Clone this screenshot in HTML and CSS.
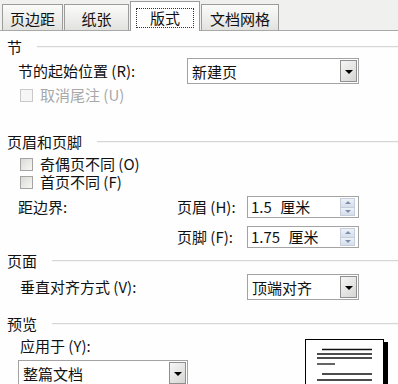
FILE: index.html
```html
<!DOCTYPE html>
<html lang="zh-CN">
<head>
<meta charset="utf-8">
<link rel="stylesheet" href="styles.css">
</head>
<body>
<div class="tabs">
  <div class="tab t1">页边距</div>
  <div class="tab t2">纸张</div>
  <div class="tab t3 active"><span class="focus">版式</span></div>
  <div class="tab t4">文档网格</div>
</div>
<div class="panel">
  <div class="sec s1"><span>节</span><i class="rule"></i></div>
  <div class="row r-start">
    <span class="lbl w169">节的起始位置 (R):</span>
    <div class="select w172"><span class="val">新建页</span><span class="btn"><i class="tri"></i></span></div>
  </div>
  <div class="check disabled r-endnote"><span class="box"></span><span class="ctext">取消尾注 (U)</span></div>

  <div class="sec s2"><span>页眉和页脚</span><i class="rule"></i></div>
  <div class="check r-odd"><span class="box"></span><span class="ctext">奇偶页不同 (O)</span></div>
  <div class="check r-first"><span class="box"></span><span class="ctext">首页不同 (F)</span></div>
  <div class="row r-spin1">
    <span class="lbl w159">距边界:</span>
    <span class="lbl w70">页眉 (H):</span>
    <div class="spin"><span class="val">1.5 厘米</span><span class="spinbtns"><span class="up"><i class="tri-up"></i></span><span class="dn"><i class="tri-dn"></i></span></span></div>
  </div>
  <div class="row r-spin2">
    <span class="lbl w159"></span>
    <span class="lbl w70">页脚 (F):</span>
    <div class="spin"><span class="val">1.75 厘米</span><span class="spinbtns"><span class="up"><i class="tri-up"></i></span><span class="dn"><i class="tri-dn"></i></span></span></div>
  </div>

  <div class="sec s3"><span>页面</span><i class="rule"></i></div>
  <div class="row r-valign">
    <span class="lbl w227 ind2">垂直对齐方式 (V):</span>
    <div class="select w112"><span class="val">顶端对齐</span><span class="btn"><i class="tri"></i></span></div>
  </div>

  <div class="sec s4"><span>预览</span><i class="rule"></i></div>
  <div class="bottom">
    <div class="apply">
      <span class="lbl ind2">应用于 (Y):</span>
      <div class="select w170 r-apply"><span class="val">整篇文档</span><span class="btn"><i class="tri"></i></span></div>
    </div>
    <svg class="preview" width="86" height="48" viewBox="0 0 86 48">
      <rect x="3" y="3" width="80" height="48" fill="#000"/>
      <rect x="0.5" y="0.5" width="78" height="50" fill="#fff" stroke="#000"/>
      <g stroke="#111" stroke-width="1.3">
        <line x1="17" y1="10.5" x2="67" y2="10.5"/>
        <line x1="12" y1="15" x2="67" y2="15"/>
        <line x1="12" y1="19" x2="67" y2="19"/>
        <line x1="12" y1="25" x2="30" y2="25"/>
        <line x1="17" y1="35" x2="67" y2="35"/>
        <line x1="12" y1="41" x2="67" y2="41"/>
      </g>
    </svg>
  </div>
</div>
</body>
</html>
```
FILE: styles.css
```css
html, body {
  margin: 0;
  padding: 0;
}
body {
  width: 398px;
  height: 384px;
  overflow: hidden;
  background: #fefefe;
  color: #111;
  font-family: "Noto Sans CJK SC", "Noto Sans", sans-serif;
  font-size: 15px;
  line-height: 16px;
}
.tabs {
  display: flex;
  align-items: flex-end;
  height: 31px;
  box-sizing: border-box;
  padding-left: 2px;
  background: #f0f0ee;
  border-bottom: 1px solid #a8a8a8;
}
.tab {
  height: 26px;
  box-sizing: border-box;
  border: 1px solid #9c9c9c;
  border-bottom: none;
  background: linear-gradient(#fbfbfa, #e2e2df);
  display: flex;
  align-items: center;
  justify-content: center;
  padding-top: 3px;
  margin-right: 1px;
}
.t1 { width: 61px; }
.t2 { width: 65px; }
.t3 { width: 70px; }
.t4 { width: 78px; }
.tab.active {
  height: 30px;
  margin-bottom: -1px;
  background: #fefefe;
  border-color: #9c9c9c;
  padding-top: 2px;
}
.focus {
  display: flex;
  align-items: center;
  justify-content: center;
  width: 58px;
  height: 20px;
  box-sizing: border-box;
  border: 1px dotted #333;
  padding-top: 1px;
}
.panel {
  display: flex;
  flex-direction: column;
}
.sec {
  display: flex;
  align-items: center;
  height: 16px;
  padding-left: 7px;
}
.rule {
  flex: 1;
  margin-left: 15px;
  border-top: 1px solid #d6d6d3;
  border-bottom: 1px solid #f5f5f5;
}
.s1 { margin-top: 8px; }
.s2 { margin-top: 31px; }
.s3 { margin-top: 5px; }
.s4 { margin-top: 16px; }

.row {
  display: flex;
  align-items: center;
  padding-left: 18px;
}
.lbl { white-space: pre; display: block; }
.w169 { width: 169px; }
.w159 { width: 159px; }
.w70 { width: 70px; }
.w227 { width: 227px; }
.ind2 { padding-left: 2px; }

.r-start { margin-top: 3px; height: 26px; }
.r-endnote { margin-top: 3px; }
.r-odd { margin-top: 6px; }
.r-first { margin-top: 2px; }
.r-spin1 { margin-top: 6px; height: 22px; }
.r-spin2 { margin-top: 8px; height: 22px; }
.r-valign { margin-top: 5px; height: 26px; }

.select {
  display: flex;
  height: 26px;
  box-sizing: border-box;
  border: 1px solid #a3a3a3;
  background: #fff;
  padding: 1px 1px 1px 0;
}
.w172 { width: 172px; }
.w112 { width: 112px; }
.w170 { width: 170px; }
.select .val {
  flex: 1;
  display: flex;
  align-items: center;
  padding-left: 4px;
  padding-top: 1px;
}
.btn {
  width: 17px;
  box-sizing: border-box;
  border: 1px solid #8f8f8f;
  background: linear-gradient(135deg, #f6f6f6, #d6d6d4);
  display: flex;
  align-items: center;
  justify-content: center;
}
.tri {
  width: 0;
  height: 0;
  border-left: 4px solid transparent;
  border-right: 4px solid transparent;
  border-top: 4px solid #000;
  margin-top: 1px;
}

.check {
  display: flex;
  align-items: center;
  height: 16px;
  padding-left: 20px;
}
.ctext {
  line-height: 14px;
  height: 14px;
  display: flex;
  align-items: center;
}
.box {
  width: 13px;
  height: 13px;
  box-sizing: border-box;
  border: 1px solid #a4a4a4;
  background: linear-gradient(135deg, #d9d9d5, #f7f7f5);
  margin-right: 7px;
}
.check.disabled { color: #a8a8a8; }
.check.disabled .box {
  border-color: #c9c9c9;
  background: #f6f6f6;
}

.spin {
  display: flex;
  width: 112px;
  height: 22px;
  box-sizing: border-box;
  border: 1px solid #a3a3a3;
  background: #fff;
  padding: 1px 3px 1px 0;
}
.spin .val {
  flex: 1;
  display: flex;
  align-items: center;
  padding-left: 3px;
  white-space: pre;
  word-spacing: 5px;
}
.spinbtns {
  width: 15px;
  display: flex;
  flex-direction: column;
}
.spinbtns span {
  flex: 1;
  display: flex;
  align-items: center;
  justify-content: center;
  background: linear-gradient(#eef2f8, #d6deea);
  border: 1px solid #c4cedc;
}
.spinbtns .dn { border-top: none; }
.tri-up {
  width: 0; height: 0;
  border-left: 3px solid transparent;
  border-right: 3px solid transparent;
  border-bottom: 3px solid #7d8fae;
}
.tri-dn {
  width: 0; height: 0;
  border-left: 3px solid transparent;
  border-right: 3px solid transparent;
  border-top: 3px solid #7d8fae;
}

.bottom {
  display: flex;
  margin-top: 6px;
  padding-left: 18px;
}
.apply {
  width: 287px;
  display: flex;
  flex-direction: column;
}
.r-apply { margin-top: 6px; }
.preview {
  display: block;
  margin-top: 1px;
}
```
